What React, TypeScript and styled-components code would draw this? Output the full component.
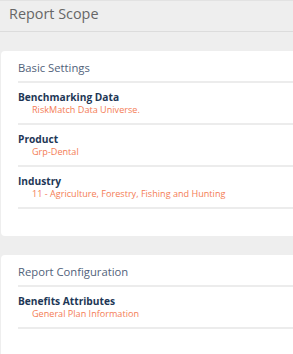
import React from 'react';
import styled, { createGlobalStyle } from 'styled-components';

const GlobalStyle = createGlobalStyle`
  body {
    margin: 0;
    background: #eeeeee;
    font-family: "Open Sans", "Liberation Sans", sans-serif;
  }
`;

const Page = styled.div`
  display: flex;
  flex-direction: column;
  gap: 19px;
  height: 354px;
  overflow: hidden;

  & > * {
    flex-shrink: 0;
  }
`;

const Header = styled.div`
  padding: 3px 0 7px 9px;
  line-height: 20px;
  border-top: 1px solid #e2e2e2;
  border-bottom: 1px solid #dcdcdc;
  font-size: 14.4px;
  color: #666;
`;

const Card = styled.section<{ $height?: number }>`
  margin-left: 1px;
  background: #fff;
  border-radius: 4px 0 0 4px;
  padding-left: 17px;
  height: ${(p) => p.$height ?? 0}px;
  box-sizing: border-box;
`;

const SectionTitle = styled.h3`
  margin: 0;
  padding: 9px 0 5px;
  line-height: 16px;
  font-size: 11.25px;
  font-weight: 400;
  color: #51627a;
  border-bottom: 2px solid #ececec;
`;

const Item = styled.div`
  padding: 8px 0 8px;
  border-bottom: 2px solid #ececec;
`;

const Label = styled.div`
  font-size: 10.2px;
  font-weight: 700;
  color: #1e3756;
  line-height: 13px;
`;

const Value = styled.div`
  font-size: 9.1px;
  color: #f47c55;
  padding-left: 14px;
  line-height: 11px;
`;

const basic = [
  { label: 'Benchmarking Data', value: 'RiskMatch Data Universe.' },
  { label: 'Product', value: 'Grp-Dental' },
  { label: 'Industry', value: '11 - Agriculture, Forestry, Fishing and Hunting' },
];

const config = [{ label: 'Benefits Attributes', value: 'General Plan Information' }];

const App: React.FC = () => {
  return (
    <>
      <GlobalStyle />
      <Page>
        <Header>Report Scope</Header>
        <Card $height={185}>
          <SectionTitle>Basic Settings</SectionTitle>
          {basic.map((b) => (
            <Item key={b.label}>
              <Label>{b.label}</Label>
              <Value>{b.value}</Value>
            </Item>
          ))}
        </Card>
        <Card $height={120}>
          <SectionTitle>Report Configuration</SectionTitle>
          {config.map((b) => (
            <Item key={b.label}>
              <Label>{b.label}</Label>
              <Value>{b.value}</Value>
            </Item>
          ))}
        </Card>
      </Page>
    </>
  );
};

export default App;
